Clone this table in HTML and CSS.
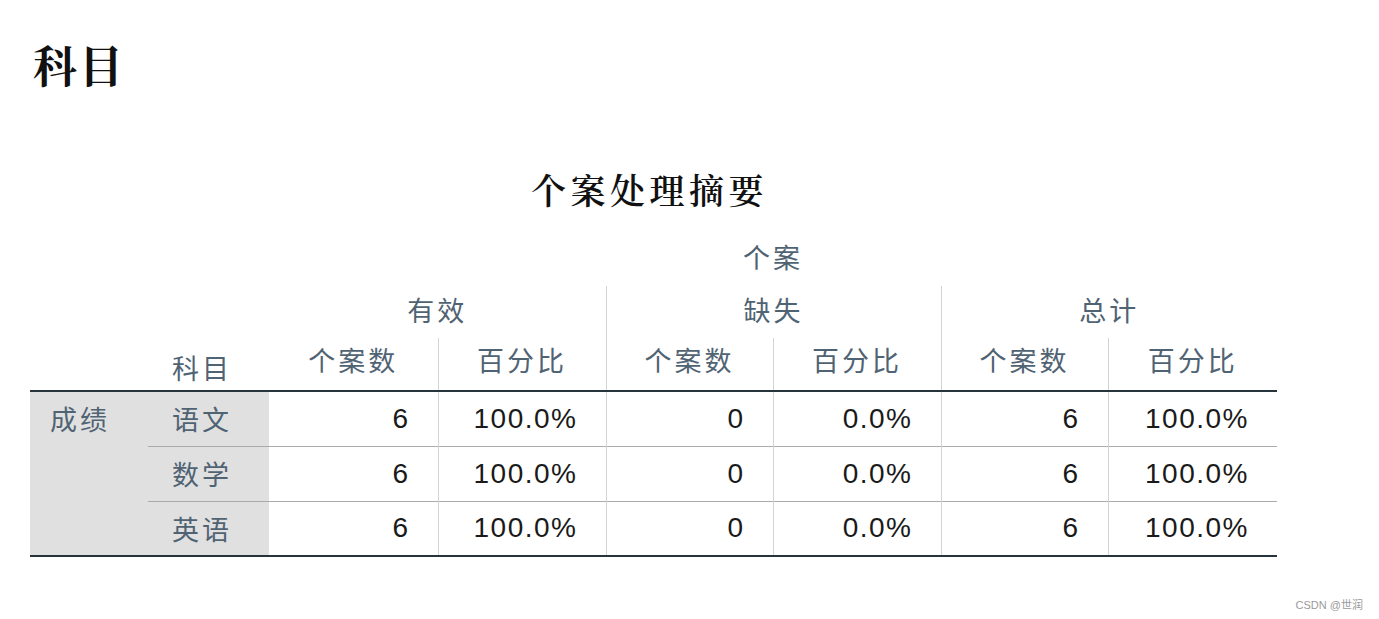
FILE: index.html
```html
<!DOCTYPE html>
<html lang="zh-CN">
<head>
<meta charset="utf-8">
<title>科目</title>
<link rel="stylesheet" href="styles.css">
</head>
<body>
<h1 class="page-title">科目</h1>
<div class="report">
  <div class="table-title">个案处理摘要</div>
  <table class="summary">
    <colgroup>
      <col class="c-grp"><col class="c-sub">
      <col class="c-d1"><col class="c-d2"><col class="c-d3"><col class="c-d4"><col class="c-d5"><col class="c-d6">
    </colgroup>
    <thead>
      <tr class="h1">
        <th></th><th></th>
        <th colspan="6" class="hd">个案</th>
      </tr>
      <tr class="h2">
        <th></th><th></th>
        <th colspan="2" class="hd">有效</th>
        <th colspan="2" class="hd vl">缺失</th>
        <th colspan="2" class="hd vl">总计</th>
      </tr>
      <tr class="h3">
        <th></th>
        <th class="lbl-head">科目</th>
        <th class="hd">个案数</th>
        <th class="hd vl">百分比</th>
        <th class="hd vl">个案数</th>
        <th class="hd vl">百分比</th>
        <th class="hd vl">个案数</th>
        <th class="hd vl">百分比</th>
      </tr>
    </thead>
    <tbody>
      <tr class="first">
        <th rowspan="3" class="grp">成绩</th>
        <th class="sub">语文</th>
        <td class="num">6</td><td class="num vl">100.0%</td>
        <td class="num vl">0</td><td class="num vl">0.0%</td>
        <td class="num vl">6</td><td class="num vl">100.0%</td>
      </tr>
      <tr class="sep">
        <th class="sub">数学</th>
        <td class="num">6</td><td class="num vl">100.0%</td>
        <td class="num vl">0</td><td class="num vl">0.0%</td>
        <td class="num vl">6</td><td class="num vl">100.0%</td>
      </tr>
      <tr class="sep last">
        <th class="sub">英语</th>
        <td class="num">6</td><td class="num vl">100.0%</td>
        <td class="num vl">0</td><td class="num vl">0.0%</td>
        <td class="num vl">6</td><td class="num vl">100.0%</td>
      </tr>
    </tbody>
  </table>
</div>
<div class="watermark">CSDN @世润</div>
</body>
</html>
```
FILE: styles.css
```css
html, body {
  margin: 0;
  padding: 0;
  background: #ffffff;
}
body {
  font-family: "Noto Sans CJK SC", "Liberation Sans", sans-serif;
  width: 1379px;
  height: 619px;
  overflow: hidden;
  position: relative;
}
.page-title {
  margin: 0;
  padding: 37px 0 0 33px;
  font-family: "Noto Serif CJK SC", "Noto Sans CJK SC", serif;
  font-size: 44px;
  font-weight: 700;
  line-height: 54px;
  letter-spacing: 2px;
  color: #111;
}
.report {
  width: 1247px;
  margin: 76px 0 0 30px;
}
.table-title {
  text-align: center;
  font-family: "Noto Serif CJK SC", "Noto Sans CJK SC", serif;
  font-size: 35px;
  font-weight: 600;
  letter-spacing: 4.5px;
  line-height: 44px;
  color: #111;
  padding-right: 8px;
}
.summary {
  border-collapse: collapse;
  table-layout: fixed;
  width: 1247px;
  margin-top: 30px;
}
.c-grp { width: 118px; }
.c-sub { width: 121px; }
.c-d1 { width: 169px; }
.c-d2 { width: 168px; }
.c-d3 { width: 167px; }
.c-d4 { width: 168px; }
.c-d5 { width: 167px; }
.c-d6 { width: 169px; }
.summary th, .summary td {
  padding: 0;
  font-weight: 400;
}
.summary .hd, .summary .lbl-head, .summary .grp, .summary .sub {
  font-size: 27px;
  letter-spacing: 3px;
  color: #506373;
}
.summary .hd {
  text-align: center;
  vertical-align: middle;
}
.h1 { height: 45px; }
.h2 { height: 52px; }
.h3 { height: 53px; }
.summary .h1 .hd { vertical-align: top; line-height: 32px; }
.summary .h2 .hd { padding-bottom: 6px; }
.summary .h3 .hd { padding-bottom: 10px; }
.summary .lbl-head {
  text-align: left;
  padding-left: 24px;
  vertical-align: bottom;
  padding-bottom: 2px;
  line-height: 40px;
}
.summary .vl { border-left: 1px solid #d4d4d4; }
.summary tbody tr { height: 55px; }
.summary .first td,
.summary .first th { border-top: 2px solid #26343e; }
.summary .last td,
.summary .last th { border-bottom: 2px solid #26343e; }
.summary .sep td, .summary .sep th { border-top: 1px solid #aaaaaa; }
.summary .grp {
  background: #e0e0e0;
  text-align: left;
  vertical-align: top;
  padding-left: 20px;
  padding-top: 8px;
  line-height: 38px;
  border-top: 2px solid #26343e;
  border-bottom: 2px solid #26343e;
}
.summary .sub {
  background: #e0e0e0;
  text-align: left;
  padding-left: 24px;
  vertical-align: middle;
}
.summary .num {
  font-family: "Liberation Sans", Arial, sans-serif;
  font-size: 28px;
  letter-spacing: 1.5px;
  color: #1a1a1a;
  text-align: right;
  padding-right: 28px;
  vertical-align: middle;
}
.watermark {
  position: absolute;
  right: 16px;
  bottom: 7px;
  font-family: "Liberation Sans", "Noto Sans CJK SC", sans-serif;
  font-size: 11px;
  color: #9a9a9a;
}
```
